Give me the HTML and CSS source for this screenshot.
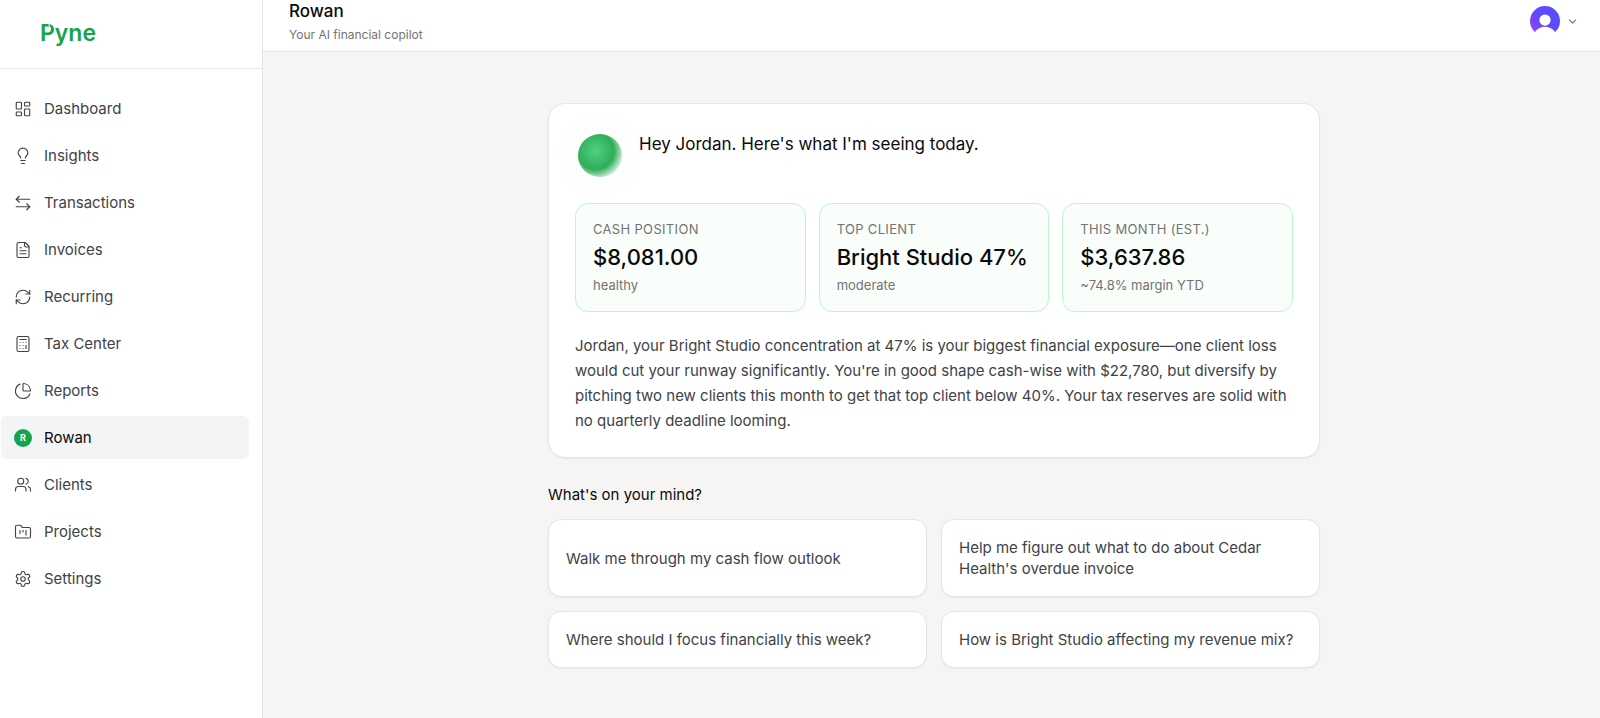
FILE: index.html
```html
<!DOCTYPE html>
<html lang="en">
<head>
  <meta charset="UTF-8">
  <meta name="viewport" content="width=device-width, initial-scale=1.0">
  <title>Pyne - Rowan</title>
  <link rel="stylesheet" href="styles.css">
</head>
<body>
  <div class="app">
    <aside class="sidebar">
      <div class="brand"><a href="#" class="logo">Pyne</a></div>
      <nav class="nav">
        <a href="#" class="nav-item">
          <svg class="icon" viewBox="0 0 24 24"><rect x="3" y="3" width="7" height="9" rx="1"/><rect x="14" y="3" width="7" height="5" rx="1"/><rect x="14" y="12" width="7" height="9" rx="1"/><rect x="3" y="16" width="7" height="5" rx="1"/></svg>
          Dashboard
        </a>
        <a href="#" class="nav-item">
          <svg class="icon" viewBox="0 0 24 24"><path d="M9 18h6M10 22h4"/><path d="M9 14.500c-.2-1-.7-1.700-1.500-2.500A6.500 6.500 0 0 1 5.500 8a6.500 6.500 0 0 1 13 0c0 1.500-.8 2.900-2 4-.8.8-1.300 1.500-1.500 2.500"/></svg>
          Insights
        </a>
        <a href="#" class="nav-item">
          <svg class="icon" viewBox="0 0 24 24"><path d="M7 3 3 7l4 4"/><path d="M3 7h18"/><path d="m17 21 4-4-4-4"/><path d="M21 17H3"/></svg>
          Transactions
        </a>
        <a href="#" class="nav-item">
          <svg class="icon" viewBox="0 0 24 24"><path d="M15 2H6a2 2 0 0 0-2 2v16a2 2 0 0 0 2 2h12a2 2 0 0 0 2-2V7Z"/><path d="M14 2v4a2 2 0 0 0 2 2h4"/><path d="M10 9H8"/><path d="M16 13H8"/><path d="M16 17H8"/></svg>
          Invoices
        </a>
        <a href="#" class="nav-item">
          <svg class="icon" viewBox="0 0 24 24"><path d="M3 12a9 9 0 0 1 9-9 9.750 9.750 0 0 1 6.740 2.740L21 8"/><path d="M21 3v5h-5"/><path d="M21 12a9 9 0 0 1-9 9 9.750 9.750 0 0 1-6.740-2.740L3 16"/><path d="M8 16H3v5"/></svg>
          Recurring
        </a>
        <a href="#" class="nav-item">
          <svg class="icon" viewBox="0 0 24 24"><rect x="4" y="2" width="16" height="20" rx="2"/><path d="M8 6h8"/><path d="M16 14v4"/><path d="M16 10h.01"/><path d="M12 10h.01"/><path d="M8 10h.01"/><path d="M12 14h.01"/><path d="M8 14h.01"/><path d="M12 18h.01"/><path d="M8 18h.01"/></svg>
          Tax Center
        </a>
        <a href="#" class="nav-item">
          <svg class="icon" viewBox="0 0 24 24"><path d="M21 12c.552 0 1.005-.449.950-.998a10 10 0 0 0-8.953-8.951c-.550-.055-.998.398-.998.950v8a1 1 0 0 0 1 1z"/><path d="M21.210 15.890A10 10 0 1 1 8 2.830"/></svg>
          Reports
        </a>
        <a href="#" class="nav-item active">
          <span class="badge">R</span>
          Rowan
        </a>
        <a href="#" class="nav-item">
          <svg class="icon" viewBox="0 0 24 24"><path d="M16 21v-2a4 4 0 0 0-4-4H6a4 4 0 0 0-4 4v2" transform="translate(0 -1)"/><circle cx="9" cy="7" r="4"/><path d="M22 20v-2a4 4 0 0 0-3-3.870"/><path d="M16 3.130a4 4 0 0 1 0 7.750"/></svg>
          Clients
        </a>
        <a href="#" class="nav-item">
          <svg class="icon" viewBox="0 0 24 24"><path d="M4 20h16a2 2 0 0 0 2-2V8a2 2 0 0 0-2-2h-7.930a2 2 0 0 1-1.660-.9l-.820-1.200A2 2 0 0 0 7.930 3H4a2 2 0 0 0-2 2v13c0 1.100.9 2 2 2Z"/><path d="M8 10v4"/><path d="M12 10v2"/><path d="M16 10v6"/></svg>
          Projects
        </a>
        <a href="#" class="nav-item">
          <svg class="icon" viewBox="0 0 24 24"><path d="M9.671 4.136a2.340 2.340 0 0 1 4.659 0 2.340 2.340 0 0 0 3.319 1.915 2.340 2.340 0 0 1 2.330 4.033 2.340 2.340 0 0 0 0 3.831 2.340 2.340 0 0 1-2.330 4.033 2.340 2.340 0 0 0-3.319 1.915 2.340 2.340 0 0 1-4.659 0 2.340 2.340 0 0 0-3.320-1.915 2.340 2.340 0 0 1-2.330-4.033 2.340 2.340 0 0 0 0-3.831A2.340 2.340 0 0 1 6.350 6.051a2.340 2.340 0 0 0 3.319-1.915"/><circle cx="12" cy="12" r="3"/></svg>
          Settings
        </a>
      </nav>
    </aside>

    <div class="main">
      <header class="topbar">
        <div>
          <h1>Rowan</h1>
          <p class="subtitle">Your AI financial copilot</p>
        </div>
        <button type="button" class="account" aria-label="Account menu">
          <svg class="avatar" viewBox="0 0 32 32">
            <defs>
              <linearGradient id="avatarFill" x1="0" y1="1" x2="1" y2="0">
                <stop offset="0" stop-color="#a83df5"/>
                <stop offset="0.4" stop-color="#6547fb"/>
                <stop offset="1" stop-color="#5350ff"/>
              </linearGradient>
              <clipPath id="avatarClip"><circle cx="16" cy="16" r="16"/></clipPath>
            </defs>
            <g clip-path="url(#avatarClip)">
              <rect width="32" height="28" fill="url(#avatarFill)"/>
              <circle cx="16" cy="15" r="6" fill="#fff"/>
              <circle cx="16" cy="35" r="13" fill="#fff"/>
            </g>
          </svg>
          <svg class="chevron" viewBox="0 0 24 24"><path d="m6 9 6 6 6-6"/></svg>
        </button>
      </header>

      <main class="content">
        <section class="card">
          <div class="greeting">
            <span class="orb"></span>
            <h2>Hey Jordan. Here's what I'm seeing today.</h2>
          </div>
          <div class="stats">
            <div class="stat">
              <div class="stat-label">Cash position</div>
              <div class="stat-value">$8,081.00</div>
              <div class="stat-note">healthy</div>
            </div>
            <div class="stat">
              <div class="stat-label">Top client</div>
              <div class="stat-value">Bright Studio 47%</div>
              <div class="stat-note">moderate</div>
            </div>
            <div class="stat">
              <div class="stat-label">This month (est.)</div>
              <div class="stat-value">$3,637.86</div>
              <div class="stat-note">~74.8% margin YTD</div>
            </div>
          </div>
          <p class="summary">Jordan, your Bright Studio concentration at 47% is your biggest financial exposure—one client loss would cut your runway significantly. You're in good shape cash-wise with $22,780, but diversify by pitching two new clients this month to get that top client below 40%. Your tax reserves are solid with no quarterly deadline looming.</p>
        </section>

        <h3>What's on your mind?</h3>
        <div class="prompts">
          <button type="button" class="prompt">Walk me through my cash flow outlook</button>
          <button type="button" class="prompt">Help me figure out what to do about Cedar Health's overdue invoice</button>
          <button type="button" class="prompt">Where should I focus financially this week?</button>
          <button type="button" class="prompt">How is Bright Studio affecting my revenue mix?</button>
        </div>
      </main>
    </div>
  </div>
</body>
</html>
```

FILE: styles.css
```css
* {
  box-sizing: border-box;
}
body {
  margin: 0;
  font-family: Inter, "Liberation Sans", sans-serif;
  font-size: 15px;
  color: #0a0a0a;
  background: #f6f5f4;
}
h1, h2, h3, p {
  margin: 0;
}
a {
  color: inherit;
  text-decoration: none;
}
button {
  font: inherit;
  color: inherit;
  cursor: pointer;
}
.app {
  display: flex;
  min-height: 100vh;
}

/* Sidebar */
.sidebar {
  flex: 0 0 263px;
  background: #fff;
  border-right: 1px solid #e5e7eb;
}
.brand {
  display: flex;
  align-items: center;
  height: 69px;
  padding: 0 40px 3px;
  border-bottom: 1px solid #e5e7eb;
}
.logo {
  position: relative;
  font-size: 23px;
  font-weight: 600;
  line-height: 28px;
  color: #16a34a;
}
/* cut in the bowl of the P */
.logo::after {
  content: "";
  position: absolute;
  top: 4px;
  left: 9px;
  width: 1px;
  height: 6px;
  background: #fff;
  transform: rotate(-20deg);
}
.nav {
  display: flex;
  flex-direction: column;
  gap: 4px;
  padding: 18px 13px 18px 1px;
}
.nav-item {
  display: flex;
  align-items: center;
  gap: 12px;
  height: 43px;
  padding: 0 13px;
  border-radius: 6px;
  color: #404248;
}
.nav-item.active {
  background: #f3f4f6;
  color: #0a0a0a;
}
.icon {
  width: 18px;
  height: 18px;
  fill: none;
  stroke: currentColor;
  stroke-width: 1.5;
  stroke-linecap: round;
  stroke-linejoin: round;
}
.badge {
  width: 18px;
  height: 18px;
  border-radius: 50%;
  background: #16a34a;
  color: #fff;
  font-size: 9px;
  font-weight: 700;
  line-height: 18px;
  text-align: center;
}

/* Top bar */
.main {
  flex: 1;
  min-width: 0;
}
.topbar {
  display: flex;
  justify-content: space-between;
  align-items: flex-start;
  padding: 0 21px 8px 26px;
  background: #fff;
  border-bottom: 1px solid #e5e5e5;
}
h1 {
  font-size: 17px;
  font-weight: 500;
  line-height: 22px;
}
.subtitle {
  margin-top: 4px;
  font-size: 12px;
  line-height: 17px;
  color: #737373;
}
.account {
  display: flex;
  align-items: center;
  gap: 6px;
  padding: 6px 0 0;
  border: none;
  background: none;
}
.avatar {
  width: 30px;
  height: 30px;
}
.chevron {
  width: 13px;
  height: 13px;
  fill: none;
  stroke: #737373;
  stroke-width: 2;
  stroke-linecap: round;
  stroke-linejoin: round;
}

/* Content */
.content {
  max-width: 825px;
  margin: 0 auto;
  padding: 51px 24px 48px 29px;
}
.card {
  padding: 26px 26px 24px;
  background: #fff;
  border: 1px solid #e7e5e4;
  border-radius: 17px;
  box-shadow: 0 1px 2px rgba(0, 0, 0, 0.05);
}
.greeting {
  display: flex;
  gap: 17px;
  padding: 4px 3px 26px;
}
.orb {
  flex: none;
  width: 44px;
  height: 43px;
  border-radius: 50%;
  background: radial-gradient(circle at 40% 40%, #4fd17d 0%, #2fae5a 50%, rgba(47, 174, 90, 0) 82%);
  box-shadow: 0 0 32px rgba(34, 197, 94, 0.06);
}
h2 {
  font-size: 17px;
  font-weight: 400;
  line-height: 20px;
}
.stats {
  display: grid;
  grid-template-columns: repeat(3, 1fr);
  gap: 13px;
}
.stat {
  padding: 17px;
  background: #f9fefb;
  border: 1px solid #b9f8cf;
  border-radius: 13px;
}
.stat-label {
  font-size: 13px;
  line-height: 17px;
  text-transform: uppercase;
  letter-spacing: 0.025em;
  color: #737373;
}
.stat-value {
  margin: 4px 0;
  font-size: 22px;
  font-weight: 500;
  line-height: 30px;
}
.stat-note {
  font-size: 13px;
  line-height: 18px;
  color: #737373;
}
.summary {
  margin-top: 21px;
  line-height: 25px;
  color: #404248;
}
h3 {
  margin: 26px 0 13px;
  font-size: 15px;
  font-weight: 400;
  line-height: 22px;
}
.prompts {
  display: grid;
  grid-template-columns: 1fr 1fr;
  gap: 14px;
}
.prompt {
  padding: 17px;
  background: #fff;
  border: 1px solid #e7e5e4;
  border-radius: 13px;
  box-shadow: 0 1px 2px rgba(0, 0, 0, 0.05);
  line-height: 21px;
  text-align: left;
  color: #404248;
}
```
